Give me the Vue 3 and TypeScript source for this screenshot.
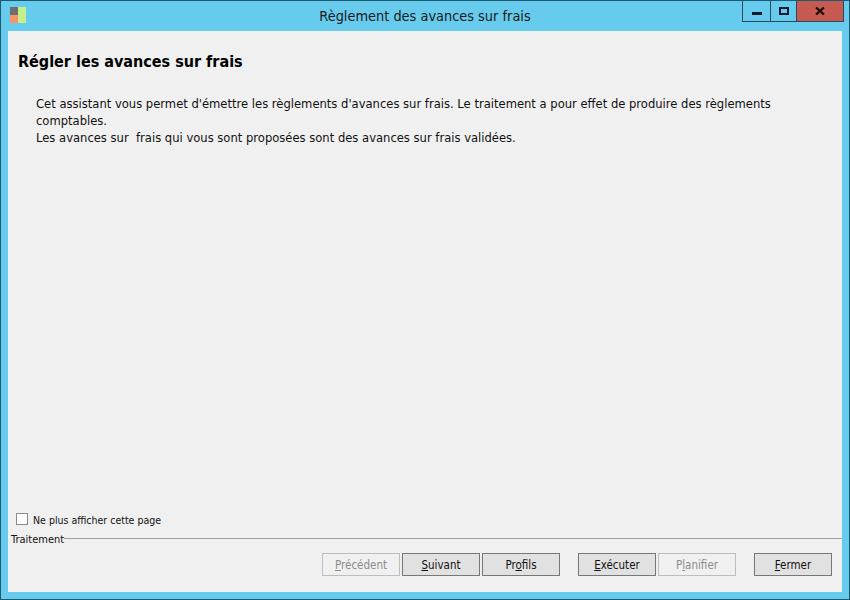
<script setup lang="ts">
interface Btn { pre: string; key: string; post: string; disabled?: boolean }
const group1: Btn[] = [
  { pre: '', key: 'P', post: 'récédent', disabled: true },
  { pre: '', key: 'S', post: 'uivant' },
  { pre: 'Pr', key: 'o', post: 'fils' },
]
const group2: Btn[] = [
  { pre: '', key: 'E', post: 'xécuter' },
  { pre: 'P', key: 'l', post: 'anifier', disabled: true },
]
const group3: Btn[] = [{ pre: '', key: 'F', post: 'ermer' }]
const groups = [group1, group2, group3]
</script>

<template>
  <div class="window">
    <header class="titlebar">
      <svg class="appicon" width="17" height="17" viewBox="0 0 17 17">
        <rect x="0" y="0" width="8" height="8" fill="#6e6e6e" />
        <rect x="0" y="8" width="8" height="8" fill="#f79468" />
        <rect x="8" y="0" width="8" height="16" fill="#c4f08a" />
      </svg>
      <div class="title">Règlement des avances sur frais</div>
      <div class="controls">
        <div class="ctl min"><span class="minbar"></span></div>
        <div class="ctl max"><span class="maxbox"></span></div>
        <div class="ctl close">
          <svg width="10" height="8" viewBox="0 0 10 8"><path d="M1 0.5 L9 7.5 M9 0.5 L1 7.5" stroke="#1a0d0a" stroke-width="2.2" fill="none" /></svg>
        </div>
      </div>
    </header>
    <main class="client">
      <h1 class="heading">Régler les avances sur frais</h1>
      <div class="intro">
        <p>Cet assistant vous permet d'émettre les règlements d'avances sur frais. Le traitement a pour effet de produire des règlements<br />comptables.</p>
        <p>Les avances sur&nbsp; frais qui vous sont proposées sont des avances sur frais validées.</p>
      </div>
      <div class="spacer"></div>
      <label class="check"><span class="box"></span>Ne plus afficher cette page</label>
      <div class="legend"><span>Traitement</span><i class="rule"></i></div>
      <footer class="actions">
        <div v-for="(g, i) in groups" :key="i" class="group">
          <button v-for="b in g" :key="b.key" class="btn" :class="{ disabled: b.disabled }" type="button">{{ b.pre }}<u>{{ b.key }}</u>{{ b.post }}</button>
        </div>
      </footer>
    </main>
  </div>
</template>

<style>
html, body { margin: 0; padding: 0; }
</style>

<style scoped>
.window {
  width: 850px; height: 600px; box-sizing: border-box;
  background: #66cbec; border: 1px solid #1c5a70;
  display: flex; flex-direction: column;
  padding: 0 7px 7px;
  font-family: "DejaVu Sans Condensed", "DejaVu Sans", sans-serif;
  font-size: 12px; color: #111;
  overflow: hidden;
}
.titlebar { height: 30px; flex: none; display: flex; align-items: flex-start; position: relative; }
.appicon { margin: 6px 0 0 2px; }
.title {
  position: absolute; left: -7px; right: -7px; top: 6px; text-align: center;
  font-size: 14.4px; line-height: 18px; color: #1a1a1a;
}
.controls {
  position: absolute; top: -1px; right: -2px; display: flex; height: 22px;
  border: 1px solid #2b4a58; border-top: none; box-sizing: border-box;
}
.ctl { display: flex; align-items: center; justify-content: center; height: 100%; box-sizing: border-box; }
.min { width: 28px; border-right: 1px solid #2b4a58; }
.max { width: 26px; border-right: 1px solid #2b4a58; }
.close { width: 46px; background: #c75a50; }
.minbar { width: 10px; height: 3px; background: #0b1a30; margin-top: 5px; }
.maxbox { width: 6px; height: 4px; border: 2px solid #0b1a30; }
.client { flex: 1; background: #f0f0f0; display: flex; flex-direction: column; min-height: 0; }
.heading { margin: 21px 0 0 10px; font-size: 16px; line-height: 20px; font-weight: 700; color: #000; }
.intro { margin: 24px 0 0 28px; line-height: 17px; width: 780px; font-family: "DejaVu Sans", sans-serif; font-size: 11.57px; }
.intro p { margin: 0; }
.spacer { flex: 1; }
.check { display: flex; align-items: center; margin-left: 8px; height: 16px; font-size: 10.5px; }
.box { width: 10px; height: 10px; background: #fff; border: 1px solid #8a8a8a; margin-right: 5px; margin-top: -3px; }
.legend { display: flex; align-items: center; height: 14px; margin: 4px 0 0 3px; font-size: 11px; }
.rule { flex: 1; height: 1px; background: #a0a0a0; margin-top: -1px; }
.actions { height: 46px; display: flex; justify-content: flex-end; gap: 18px; padding: 7px 10px 0 0; box-sizing: border-box; }
.group { display: flex; gap: 2px; }
.btn {
  width: 78px; height: 23px; box-sizing: border-box; padding: 0;
  background: #e1e1e1; border: 1px solid #777; color: #111;
  font: inherit; font-size: 11.5px;
}
.btn.disabled { background: #f0f0f0; border-color: #bdbdbd; color: #8c8c8c; }
</style>
